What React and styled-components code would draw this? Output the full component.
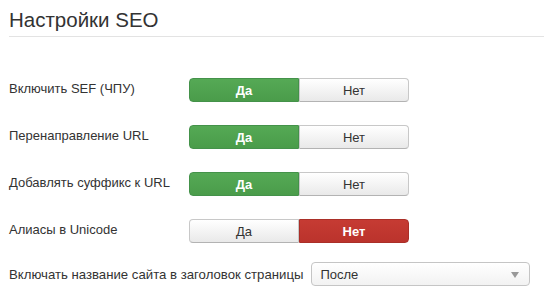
import React from "react";
import styled, { createGlobalStyle } from "styled-components";

const GlobalStyle = createGlobalStyle`
  body {
    margin: 0;
    background: #fff;
    font-family: "Liberation Sans", Arial, sans-serif;
    color: #333;
  }
`;

const Page = styled.div`
  padding: 8px 0 0 9px;
`;

const Heading = styled.h2`
  margin: 0;
  padding-bottom: 4px;
  font-size: 20.5px;
  line-height: 24px;
  font-weight: normal;
  color: #333;
  border-bottom: 1px solid #e3e3e3;
`;

const Form = styled.div`
  margin-top: 41px;
`;

const Row = styled.div`
  display: flex;
  align-items: flex-start;
  height: 24px;
  margin-bottom: 23px;
`;

const Label = styled.div`
  width: 180px;
  padding-top: 3px;
  font-size: 13px;
  line-height: 16px;
  color: #333;
`;

const Toggle = styled.div`
  display: flex;
  width: 220px;
  height: 24px;
`;

const colors = {
  green: { bg: "linear-gradient(#55a955, #4a9c4a)", border: "#44924a" },
  red: { bg: "linear-gradient(#c63b33, #bb332c)", border: "#aa2f28" },
};

const Half = styled.div`
  flex: 1;
  display: flex;
  align-items: center;
  justify-content: center;
  font-size: 13px;
  box-sizing: border-box;
  ${({ $active }) =>
    $active
      ? `
    background: ${colors[$active].bg};
    border: 1px solid ${colors[$active].border};
    color: #fff;
    font-weight: bold;
  `
      : `
    background: linear-gradient(#ffffff, #e9e9e9);
    border: 1px solid #c8c8c8;
    border-bottom-color: #b3b3b3;
    color: #333;
  `}
  &:first-child {
    border-radius: 4px 0 0 4px;
  }
  &:last-child {
    border-radius: 0 4px 4px 0;
  }
`;

const InlineRow = styled.div`
  display: flex;
  align-items: center;
  gap: 8px;
  margin-top: -4px;
`;

const InlineLabel = styled.span`
  font-size: 13.2px;
  color: #333;
`;

const Select = styled.div`
  position: relative;
  width: 219px;
  height: 24px;
  box-sizing: border-box;
  border: 1px solid #c5c5c5;
  border-radius: 4px;
  background: linear-gradient(#ffffff, #f2f2f2);
  display: flex;
  align-items: center;
  padding-left: 8px;
  font-size: 13px;
  color: #333;
`;

const Arrow = styled.span`
  position: absolute;
  right: 10px;
  top: 9px;
  width: 0;
  height: 0;
  border-left: 4px solid transparent;
  border-right: 4px solid transparent;
  border-top: 6px solid #999;
`;

const settings = [
  { label: "Включить SEF (ЧПУ)", value: true },
  { label: "Перенаправление URL", value: true },
  { label: "Добавлять суффикс к URL", value: true },
  { label: "Алиасы в Unicode", value: false },
];

export default function App() {
  return (
    <>
      <GlobalStyle />
      <Page>
        <Heading>Настройки SEO</Heading>
        <Form>
          {settings.map((s) => (
            <Row key={s.label}>
              <Label>{s.label}</Label>
              <Toggle>
                <Half $active={s.value ? "green" : null}>Да</Half>
                <Half $active={s.value ? null : "red"}>Нет</Half>
              </Toggle>
            </Row>
          ))}
          <InlineRow>
            <InlineLabel>Включать название сайта в заголовок страницы</InlineLabel>
            <Select>
              После
              <Arrow />
            </Select>
          </InlineRow>
        </Form>
      </Page>
    </>
  );
}
